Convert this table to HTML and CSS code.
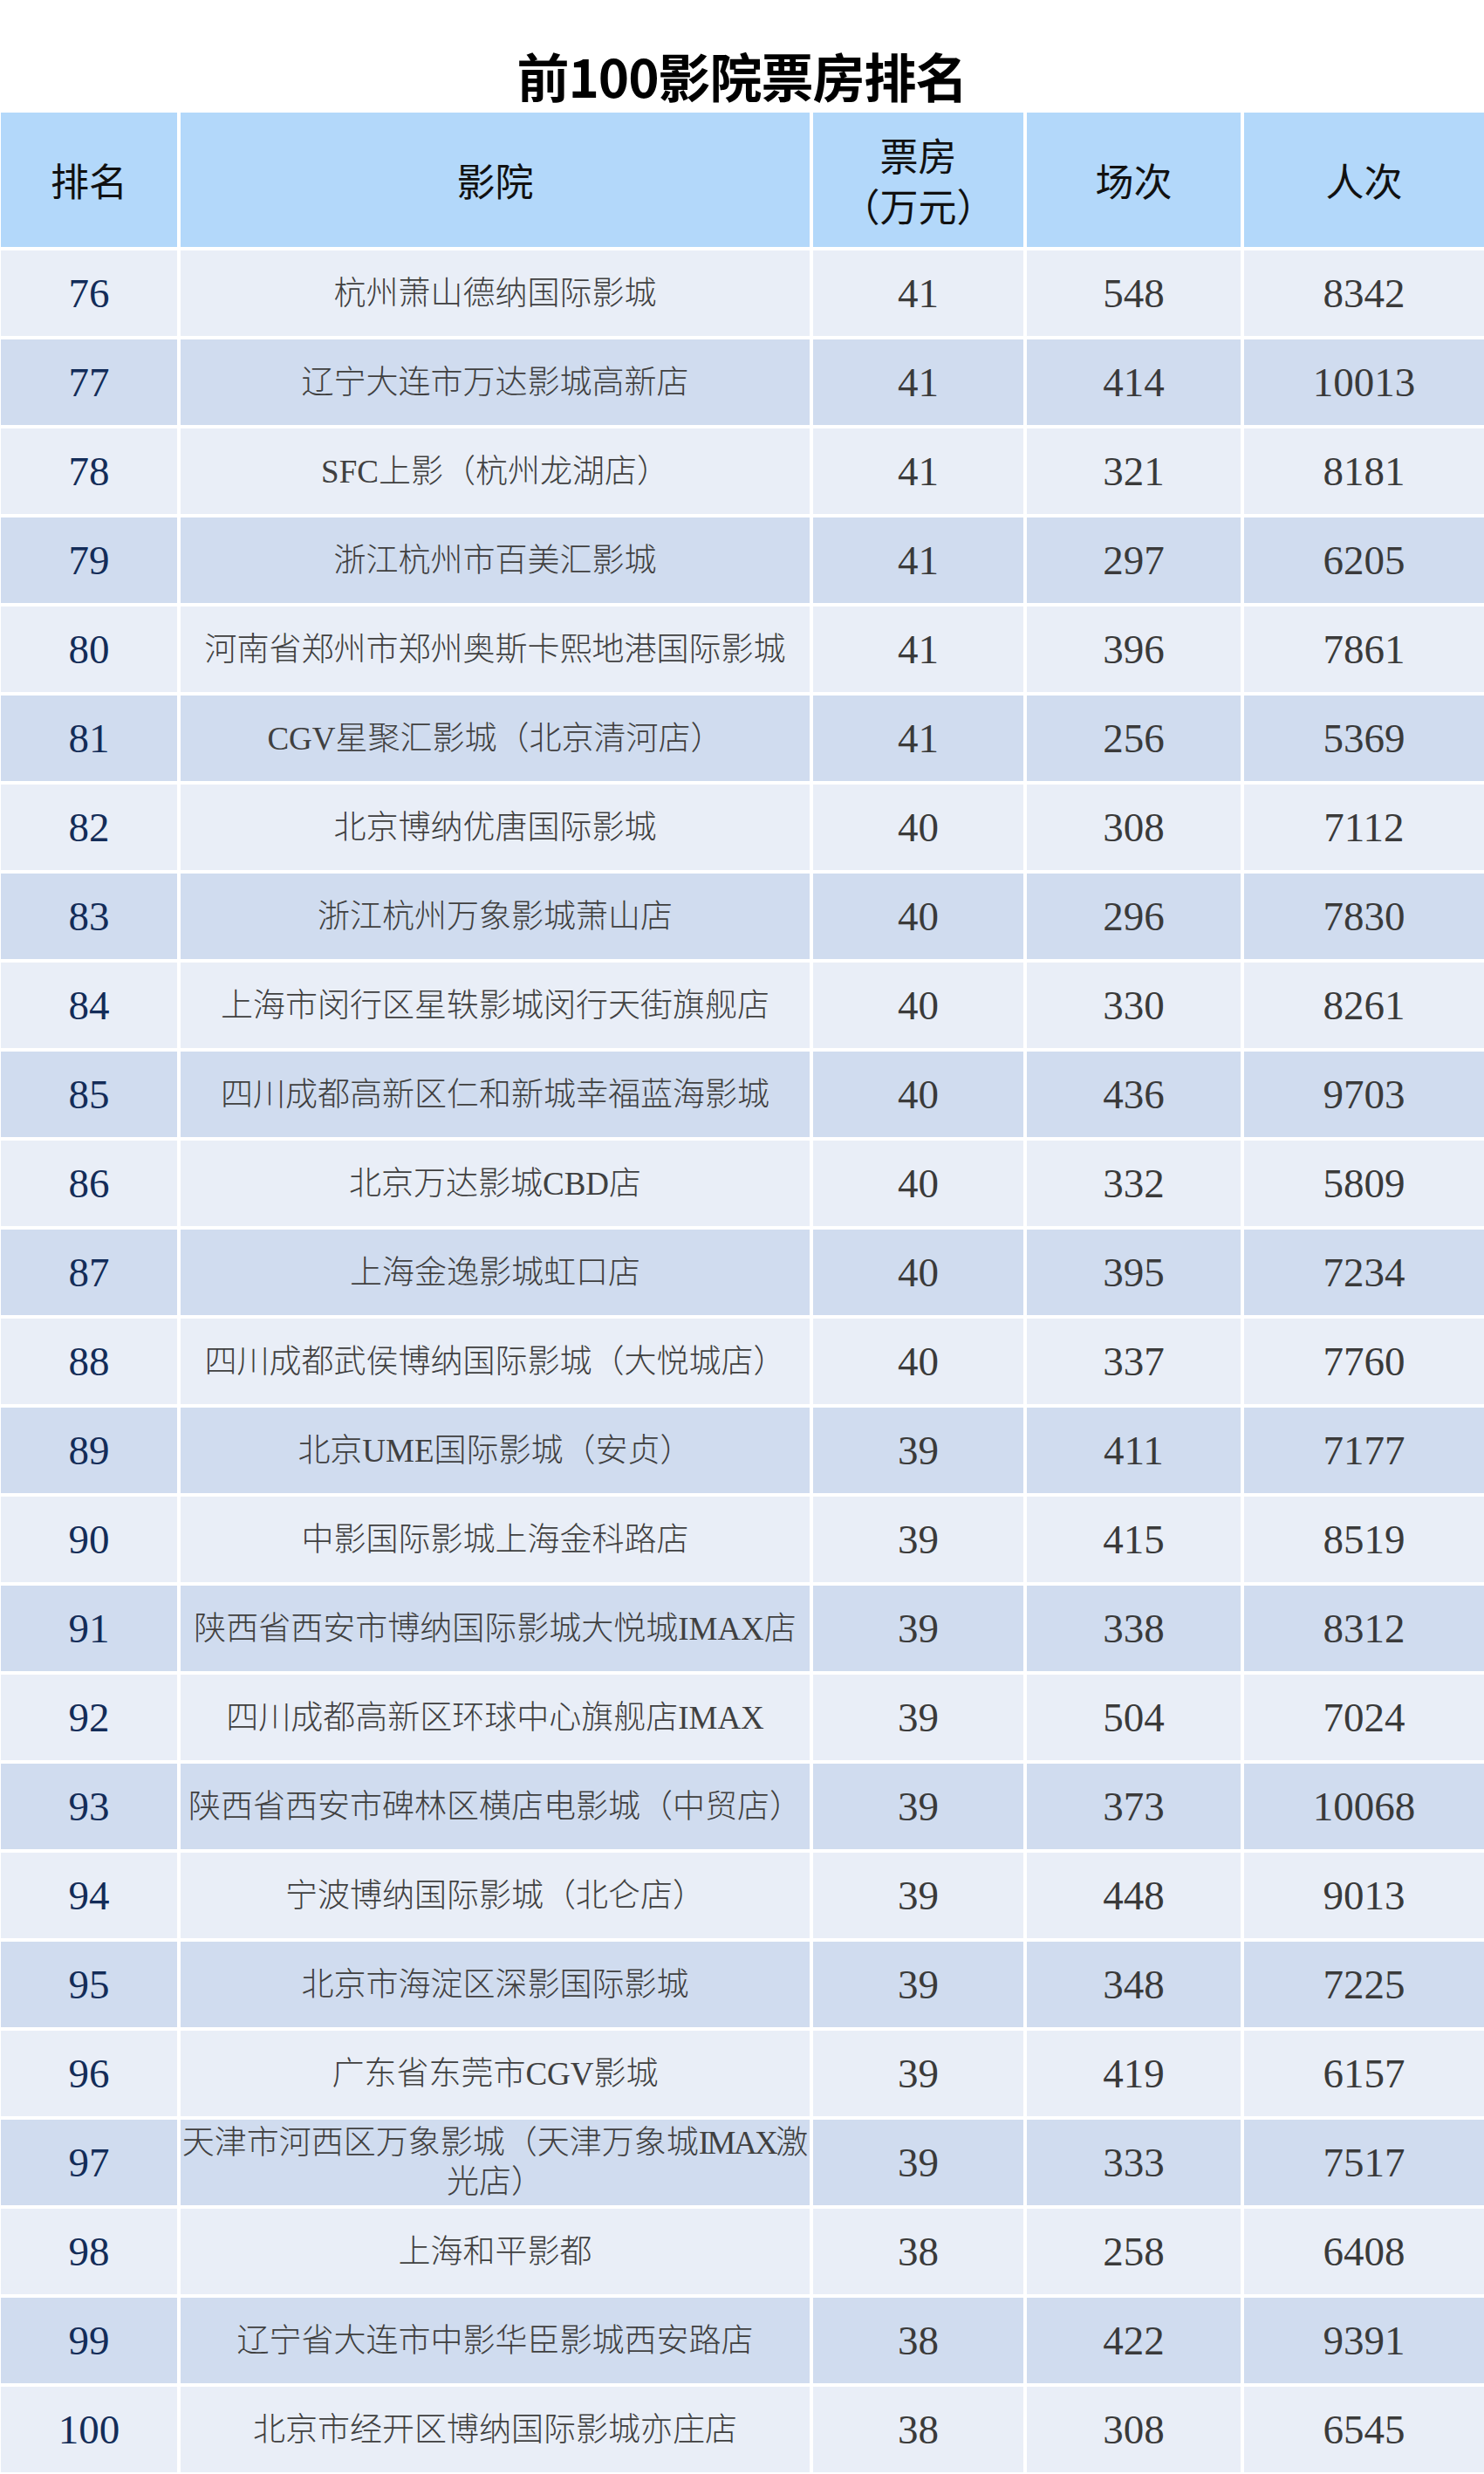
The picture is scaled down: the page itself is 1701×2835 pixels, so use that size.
FILE: index.html
```html
<!DOCTYPE html>
<html lang="zh-CN">
<head>
<meta charset="utf-8">
<title>前100影院票房排名</title>
<link rel="stylesheet" href="styles.css">
</head>
<body>
<div class="page">
  <div class="title">前100影院票房排名</div>
  <div class="table">
    <div class="row head">
      <div class="cell">排名</div>
      <div class="cell">影院</div>
      <div class="cell">票房<br>（万元）</div>
      <div class="cell">场次</div>
      <div class="cell">人次</div>
    </div>
    <div class="row light"><div class="cell rank">76</div><div class="cell name">杭州萧山德纳国际影城</div><div class="cell num">41</div><div class="cell num">548</div><div class="cell num">8342</div></div>
    <div class="row dark"><div class="cell rank">77</div><div class="cell name">辽宁大连市万达影城高新店</div><div class="cell num">41</div><div class="cell num">414</div><div class="cell num">10013</div></div>
    <div class="row light"><div class="cell rank">78</div><div class="cell name">SFC上影（杭州龙湖店）</div><div class="cell num">41</div><div class="cell num">321</div><div class="cell num">8181</div></div>
    <div class="row dark"><div class="cell rank">79</div><div class="cell name">浙江杭州市百美汇影城</div><div class="cell num">41</div><div class="cell num">297</div><div class="cell num">6205</div></div>
    <div class="row light"><div class="cell rank">80</div><div class="cell name">河南省郑州市郑州奥斯卡熙地港国际影城</div><div class="cell num">41</div><div class="cell num">396</div><div class="cell num">7861</div></div>
    <div class="row dark"><div class="cell rank">81</div><div class="cell name">CGV星聚汇影城（北京清河店）</div><div class="cell num">41</div><div class="cell num">256</div><div class="cell num">5369</div></div>
    <div class="row light"><div class="cell rank">82</div><div class="cell name">北京博纳优唐国际影城</div><div class="cell num">40</div><div class="cell num">308</div><div class="cell num">7112</div></div>
    <div class="row dark"><div class="cell rank">83</div><div class="cell name">浙江杭州万象影城萧山店</div><div class="cell num">40</div><div class="cell num">296</div><div class="cell num">7830</div></div>
    <div class="row light"><div class="cell rank">84</div><div class="cell name">上海市闵行区星轶影城闵行天街旗舰店</div><div class="cell num">40</div><div class="cell num">330</div><div class="cell num">8261</div></div>
    <div class="row dark"><div class="cell rank">85</div><div class="cell name">四川成都高新区仁和新城幸福蓝海影城</div><div class="cell num">40</div><div class="cell num">436</div><div class="cell num">9703</div></div>
    <div class="row light"><div class="cell rank">86</div><div class="cell name">北京万达影城CBD店</div><div class="cell num">40</div><div class="cell num">332</div><div class="cell num">5809</div></div>
    <div class="row dark"><div class="cell rank">87</div><div class="cell name">上海金逸影城虹口店</div><div class="cell num">40</div><div class="cell num">395</div><div class="cell num">7234</div></div>
    <div class="row light"><div class="cell rank">88</div><div class="cell name">四川成都武侯博纳国际影城（大悦城店）</div><div class="cell num">40</div><div class="cell num">337</div><div class="cell num">7760</div></div>
    <div class="row dark"><div class="cell rank">89</div><div class="cell name">北京UME国际影城（安贞）</div><div class="cell num">39</div><div class="cell num">411</div><div class="cell num">7177</div></div>
    <div class="row light"><div class="cell rank">90</div><div class="cell name">中影国际影城上海金科路店</div><div class="cell num">39</div><div class="cell num">415</div><div class="cell num">8519</div></div>
    <div class="row dark"><div class="cell rank">91</div><div class="cell name">陕西省西安市博纳国际影城大悦城IMAX店</div><div class="cell num">39</div><div class="cell num">338</div><div class="cell num">8312</div></div>
    <div class="row light"><div class="cell rank">92</div><div class="cell name">四川成都高新区环球中心旗舰店IMAX</div><div class="cell num">39</div><div class="cell num">504</div><div class="cell num">7024</div></div>
    <div class="row dark"><div class="cell rank">93</div><div class="cell name">陕西省西安市碑林区横店电影城（中贸店）</div><div class="cell num">39</div><div class="cell num">373</div><div class="cell num">10068</div></div>
    <div class="row light"><div class="cell rank">94</div><div class="cell name">宁波博纳国际影城（北仑店）</div><div class="cell num">39</div><div class="cell num">448</div><div class="cell num">9013</div></div>
    <div class="row dark"><div class="cell rank">95</div><div class="cell name">北京市海淀区深影国际影城</div><div class="cell num">39</div><div class="cell num">348</div><div class="cell num">7225</div></div>
    <div class="row light"><div class="cell rank">96</div><div class="cell name">广东省东莞市CGV影城</div><div class="cell num">39</div><div class="cell num">419</div><div class="cell num">6157</div></div>
    <div class="row dark"><div class="cell rank">97</div><div class="cell name tightpad"><span class="txt">天津市河西区万象影城（天津万象城<span class="tight">IMAX</span>激光店）</span></div><div class="cell num">39</div><div class="cell num">333</div><div class="cell num">7517</div></div>
    <div class="row light"><div class="cell rank">98</div><div class="cell name">上海和平影都</div><div class="cell num">38</div><div class="cell num">258</div><div class="cell num">6408</div></div>
    <div class="row dark"><div class="cell rank">99</div><div class="cell name">辽宁省大连市中影华臣影城西安路店</div><div class="cell num">38</div><div class="cell num">422</div><div class="cell num">9391</div></div>
    <div class="row light"><div class="cell rank">100</div><div class="cell name">北京市经开区博纳国际影城亦庄店</div><div class="cell num">38</div><div class="cell num">308</div><div class="cell num">6545</div></div>
  </div>
</div>
</body>
</html>
```
FILE: styles.css
```css
html, body {
  margin: 0;
  padding: 0;
  background: #ffffff;
}

.page {
  width: 1701px;
}

.title {
  height: 125px;
  box-sizing: border-box;
  padding-top: 56px;
  text-align: center;
  font-family: "Noto Sans CJK SC", sans-serif;
  font-weight: 700;
  font-size: 60px;
  line-height: 60px;
  color: #000000;
  letter-spacing: -1px;
}

.table {
  display: flex;
  flex-direction: column;
  gap: 4px;
  margin-top: 4px;
}

.row {
  display: grid;
  grid-template-columns: 202px 721px 241px 245px 275px;
  column-gap: 4px;
  padding-left: 1px;
  height: 98px;
}

.row.head {
  height: 154px;
}

.cell {
  display: flex;
  align-items: center;
  justify-content: center;
  text-align: center;
  box-sizing: border-box;
  padding: 0 4px;
}

.head .cell {
  background: #b3d8fa;
  font-family: "Noto Sans CJK SC", sans-serif;
  font-size: 44px;
  line-height: 58px;
  color: #111111;
  padding: 0 4px;
}

.light .cell {
  background: #e9eef7;
}

.dark .cell {
  background: #d0dcef;
}

.rank {
  font-family: "Liberation Serif", serif;
  font-size: 47px;
  color: #132c58;
}

.num {
  font-family: "Liberation Serif", serif;
  font-size: 47px;
  color: #3a3a3a;
}

.name {
  font-family: "Liberation Serif", "Noto Sans CJK SC", serif;
  font-size: 37px;
  line-height: 45px;
  color: #404040;
  font-weight: 300;
}

.name.tightpad {
  padding: 0;
}

.txt {
  display: block;
}

.tight {
  letter-spacing: -2.5px;
}
```
